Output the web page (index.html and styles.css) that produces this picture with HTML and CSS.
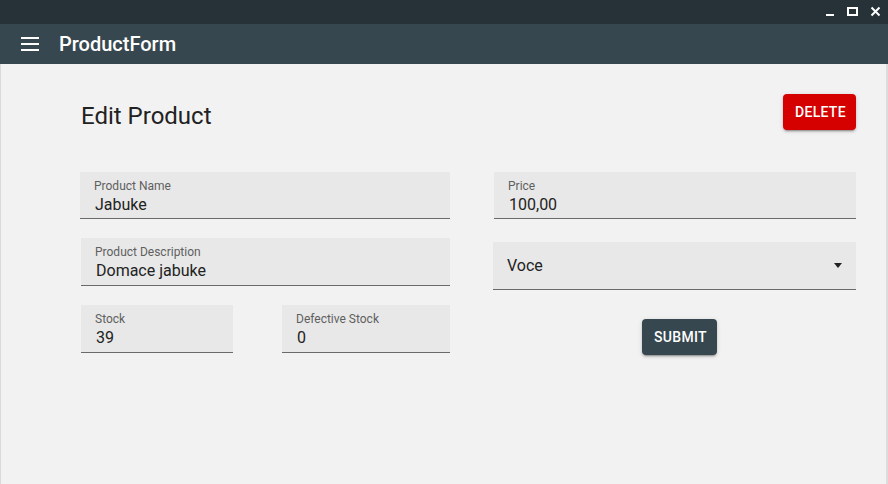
FILE: index.html
```html
<!DOCTYPE html>
<html lang="en">
<head>
<meta charset="utf-8">
<title>ProductForm</title>
<link rel="stylesheet" href="styles.css">
</head>
<body>
<div class="window">
  <div class="titlebar">
    <svg class="ctl" width="10" height="24" viewBox="0 0 10 24"><rect x="1" y="14" width="8" height="2" fill="#fff"/></svg>
    <svg class="ctl" width="11" height="24" viewBox="0 0 11 24"><rect x="1" y="8" width="9" height="7" fill="none" stroke="#fff" stroke-width="2"/></svg>
    <svg class="ctl" width="11" height="24" viewBox="0 0 11 24"><path d="M1.5 7.5 L9.5 15.5 M9.5 7.5 L1.5 15.5" stroke="#fff" stroke-width="2"/></svg>
  </div>
  <header class="appbar">
    <svg class="menu" width="18" height="14" viewBox="0 0 18 14"><rect x="0" y="0" width="18" height="2" fill="#fff"/><rect x="0" y="6" width="18" height="2" fill="#fff"/><rect x="0" y="12" width="18" height="2" fill="#fff"/></svg>
    <span class="app-title">ProductForm</span>
  </header>
  <main class="content">
    <div class="head-row">
      <h1 class="heading">Edit Product</h1>
      <button class="btn btn-delete">Delete</button>
    </div>
    <div class="form">
      <div class="col col-left">
        <div class="field w-full">
          <span class="label">Product Name</span>
          <span class="value">Jabuke</span>
        </div>
        <div class="field w-full f-desc">
          <span class="label">Product Description</span>
          <span class="value">Domace jabuke</span>
        </div>
        <div class="pair">
          <div class="field f-stock">
            <span class="label">Stock</span>
            <span class="value">39</span>
          </div>
          <div class="field f-def">
            <span class="label">Defective Stock</span>
            <span class="value">0</span>
          </div>
        </div>
      </div>
      <div class="col col-right">
        <div class="field w-full f-price">
          <span class="label">Price</span>
          <span class="value">100,00</span>
        </div>
        <div class="select">
          <span class="select-value">Voce</span>
          <span class="arrow"></span>
        </div>
        <button class="btn btn-submit">Submit</button>
      </div>
    </div>
  </main>
</div>
</body>
</html>
```
FILE: styles.css
```css
* { box-sizing: border-box; }
html, body { margin: 0; padding: 0; }
body {
  width: 888px;
  height: 484px;
  overflow: hidden;
  font-family: Roboto, "Liberation Sans", sans-serif;
  background: #f2f2f2;
}
.window { display: flex; flex-direction: column; height: 484px; }
.titlebar {
  height: 24px;
  background: #263238;
  display: flex;
  justify-content: flex-end;
  align-items: flex-start;
  padding-right: 7px;
  gap: 12px;
}
.ctl { display: block; }
.appbar {
  height: 40px;
  background: #37474f;
  display: flex;
  align-items: center;
  padding-left: 21px;
  gap: 20px;
}
.menu { display: block; }
.app-title {
  color: #fff;
  font-size: 20px;
  font-weight: 500;
  line-height: 24px;
}
.content {
  flex: 1;
  border-left: 1px solid #d9d9d9;
  border-right: 2px solid #dcdcdc;
  padding: 30px 30px 0 79px;
}
.head-row {
  display: flex;
  justify-content: space-between;
  align-items: flex-start;
  height: 36px;
}
.heading {
  margin: 0 0 0 1px;
  padding-top: 4px;
  font-size: 24px;
  font-weight: 400;
  line-height: 36px;
  color: #222;
}
.btn {
  border: none;
  border-radius: 4px;
  color: #fff;
  font-family: Roboto, "Liberation Sans", sans-serif;
  font-size: 14px;
  font-weight: 500;
  letter-spacing: 0.3px;
  text-transform: uppercase;
  height: 36px;
  padding: 0 12px;
  box-shadow: 0 3px 1px -2px rgba(0,0,0,0.2), 0 2px 2px 0 rgba(0,0,0,0.14), 0 1px 5px 0 rgba(0,0,0,0.12);
}
.btn-delete { background: #d50000; width: 73px; }
.btn-submit { background: #37474f; width: 75px; align-self: flex-start; margin-left: 148px; margin-top: 29px; }
.form {
  display: flex;
  gap: 44px;
  margin-top: 42px;
}
.col { display: flex; flex-direction: column; }
.col-left { width: 370px; }
.col-right { width: 362px; }
.field {
  background: #e8e8e8;
  border-bottom: 1px solid #6a6a6a;
  height: 47px;
  padding: 7px 0 0 14px;
  display: flex;
  flex-direction: column;
}
.label {
  font-size: 12px;
  line-height: 14px;
  color: #5f5f5f;
}
.value {
  font-size: 16px;
  line-height: 20px;
  color: #222;
  margin-top: 2px;
  padding-left: 1px;
}
.f-desc { margin-top: 19px; margin-left: 1px; height: 48px; }
.pair { display: flex; justify-content: space-between; margin-top: 19px; margin-left: 1px; }
.f-stock { width: 152px; height: 48px; }
.f-def { width: 168px; height: 48px; }
.select {
  margin-top: 23px;
  margin-left: -1px;
  height: 48px;
  background: #e8e8e8;
  border-bottom: 1px solid #6a6a6a;
  display: flex;
  align-items: center;
  justify-content: space-between;
  padding: 0 14px 0 14px;
}
.select-value { font-size: 16px; color: #222; }
.arrow {
  width: 0;
  height: 0;
  border-left: 4px solid transparent;
  border-right: 4px solid transparent;
  border-top: 5px solid #222;
}
```
